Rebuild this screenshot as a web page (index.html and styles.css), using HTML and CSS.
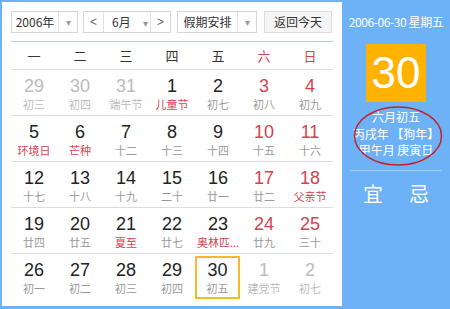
FILE: index.html
```html
<!DOCTYPE html>
<html lang="zh-CN">

<head>
    <meta charset="UTF-8">
    <meta name="viewport" content="width=device-width, initial-scale=1.0">
    <title>万年历</title>
    <link rel="stylesheet" href="styles.css">
</head>

<body>
    <div class="calendar">
        <div class="main">
            <div class="toolbar">
                <div class="select year">
                    <span class="label">2006年</span>
                    <span class="arrow">▾</span>
                </div>
                <div class="select month">
                    <span class="nav">&lt;</span>
                    <span class="label">6月<i class="arrow">▾</i></span>
                    <span class="nav">&gt;</span>
                </div>
                <div class="select holiday">
                    <span class="label">假期安排</span>
                    <span class="arrow">▾</span>
                </div>
                <button class="today-btn">返回今天</button>
            </div>

            <div class="weekdays">
                <span>一</span><span>二</span><span>三</span><span>四</span><span>五</span>
                <span class="red">六</span><span class="red">日</span>
            </div>

            <div class="days" id="days"></div>
        </div>

        <div class="side">
            <div class="side-date">2006-06-30 星期五</div>
            <div class="big-day">30</div>
            <div class="lunar">
                <p>六月初五</p>
                <p>丙戌年 【狗年】</p>
                <p>甲午月 庚寅日</p>
                <svg class="circle" width="90" height="60" viewBox="0 0 90 60">
                    <ellipse cx="45" cy="30" rx="43.5" ry="29" fill="none" stroke="#c4202e" stroke-width="1.5" />
                </svg>
            </div>
            <div class="yiji">
                <span>宜</span><span>忌</span>
            </div>
        </div>
    </div>

    <script>
        // [日期, 农历/节日, 类型]  o = 非本月, h = 节日(红), w = 周末
        const days = [
            ['29', '初三', 'o'], ['30', '初四', 'o'], ['31', '端午节', 'o'], ['1', '儿童节', 'h'], ['2', '初七', ''], ['3', '初八', 'w'], ['4', '初九', 'w'],
            ['5', '环境日', 'h'], ['6', '芒种', 'h'], ['7', '十二', ''], ['8', '十三', ''], ['9', '十四', ''], ['10', '十五', 'w'], ['11', '十六', 'w'],
            ['12', '十七', ''], ['13', '十八', ''], ['14', '十九', ''], ['15', '二十', ''], ['16', '廿一', ''], ['17', '廿二', 'w'], ['18', '父亲节', 'w h'],
            ['19', '廿四', ''], ['20', '廿五', ''], ['21', '夏至', 'h'], ['22', '廿七', ''], ['23', '奥林匹...', 'h'], ['24', '廿九', 'w'], ['25', '三十', 'w'],
            ['26', '初一', ''], ['27', '初二', ''], ['28', '初三', ''], ['29', '初四', ''], ['30', '初五', 'today'], ['1', '建党节', 'o'], ['2', '初七', 'o']
        ];

        const daysEl = document.getElementById('days');
        for (let i = 0; i < days.length; i += 7) {
            const row = document.createElement('div');
            row.className = 'week';
            days.slice(i, i + 7).forEach(d => {
                const cell = document.createElement('div');
                cell.className = 'day ' + d[2];
                cell.innerHTML = `<span class="num">${d[0]}</span><span class="sub">${d[1]}</span>`;
                row.appendChild(cell);
            });
            daysEl.appendChild(row);
        }
    </script>
</body>

</html>
```

FILE: styles.css
```css
body {
    margin: 0;
    font-family: "Liberation Sans", "Noto Sans CJK SC", sans-serif;
    background: #fff;
}

.calendar {
    width: 450px;
    height: 309px;
    display: flex;
    background: #6db2f6;
}

.main {
    width: 322px;
    margin: 2px 0 3px 2px;
    padding: 9px 9px 0 9px;
    background: #fff;
}

.toolbar {
    display: flex;
    height: 22px;
}

.select {
    display: flex;
    align-items: stretch;
    border: 1px solid #d6d6d6;
    font-family: "Noto Sans CJK SC", sans-serif;
    font-size: 12px;
    color: #333;
    line-height: 20px;
    box-sizing: border-box;
}

.select .label {
    text-align: center;
}

.arrow {
    color: #999;
    font-size: 10px;
    font-style: normal;
    text-align: center;
}

.year {
    width: 67px;
    margin-right: 5px;
}

.year .label {
    width: 46px;
    border-right: 1px solid #e2e2e2;
}

.year .arrow,
.holiday .arrow {
    flex: 1;
}

.month {
    width: 88px;
    margin-right: 6px;
}

.month .nav {
    width: 19px;
    text-align: center;
    color: #666;
    font-family: "Liberation Sans", sans-serif;
}

.month .nav:first-child {
    border-right: 1px solid #e2e2e2;
}

.month .nav:last-child {
    border-left: 1px solid #e2e2e2;
}

.month .label {
    flex: 1;
    padding-left: 8px;
    text-align: left;
}

.month .label .arrow {
    margin-left: 12px;
}

.holiday {
    width: 80px;
    margin-right: 7px;
}

.holiday .label {
    width: 59px;
    border-right: 1px solid #e2e2e2;
}

.today-btn {
    width: 68px;
    height: 22px;
    padding: 0;
    border: 1px solid #dcdcdc;
    background: #f5f5f5;
    color: #333;
    font-family: "Noto Sans CJK SC", sans-serif;
    font-size: 12px;
    line-height: 20px;
}

.weekdays {
    display: grid;
    grid-template-columns: repeat(7, 46px);
    margin-top: 8px;
    height: 27px;
    border-top: 1px solid #a9cfee;
    border-bottom: 1px solid #dcdcdc;
    font-family: "Noto Sans CJK SC", sans-serif;
    font-size: 13px;
    line-height: 27px;
    color: #333;
    text-align: center;
}

.red {
    color: #d2434f;
}

.week {
    display: grid;
    grid-template-columns: repeat(7, 46px);
    height: 45px;
    border-bottom: 1px solid #dcdcdc;
}

.week:last-child {
    border-bottom: none;
}

.day {
    display: flex;
    flex-direction: column;
    align-items: center;
    padding-top: 6px;
    box-sizing: border-box;
}

.num {
    font-size: 18px;
    line-height: 20px;
    color: #222;
}

.sub {
    font-family: "Noto Sans CJK SC", sans-serif;
    font-size: 11px;
    line-height: 16px;
    color: #999;
    white-space: nowrap;
}

.day.o .num,
.day.o .sub {
    color: #bbb;
}

.day.w .num {
    color: #d2434f;
}

.day.h .sub {
    color: #d2434f;
}

.day.today {
    margin: 2px 1px 0 0;
    padding-top: 2px;
    height: 43px;
    border: 2px solid #f6b927;
}

.side {
    flex: 1;
    display: flex;
    flex-direction: column;
    align-items: center;
    color: #fff;
    font-family: "Noto Sans CJK SC", sans-serif;
}

.side-date {
    margin-top: 14px;
    font-size: 12px;
    line-height: 16px;
    letter-spacing: -0.4px;
}

.big-day {
    margin-top: 14px;
    width: 60px;
    height: 58px;
    background: #ffb300;
    font-family: "Liberation Sans", sans-serif;
    font-size: 44px;
    line-height: 58px;
    text-align: center;
}

.lunar {
    position: relative;
    margin-top: 7px;
    width: 92px;
    font-size: 12px;
    line-height: 16.5px;
    text-align: center;
}

.lunar p {
    margin: 0;
}

.lunar .circle {
    position: absolute;
    left: 3px;
    top: -3px;
}

.yiji {
    margin-top: 11px;
    width: 92px;
    padding-top: 10px;
    border-top: 1px solid #a6d0fa;
    display: flex;
    justify-content: space-around;
    font-size: 20px;
    line-height: 26px;
}
```
